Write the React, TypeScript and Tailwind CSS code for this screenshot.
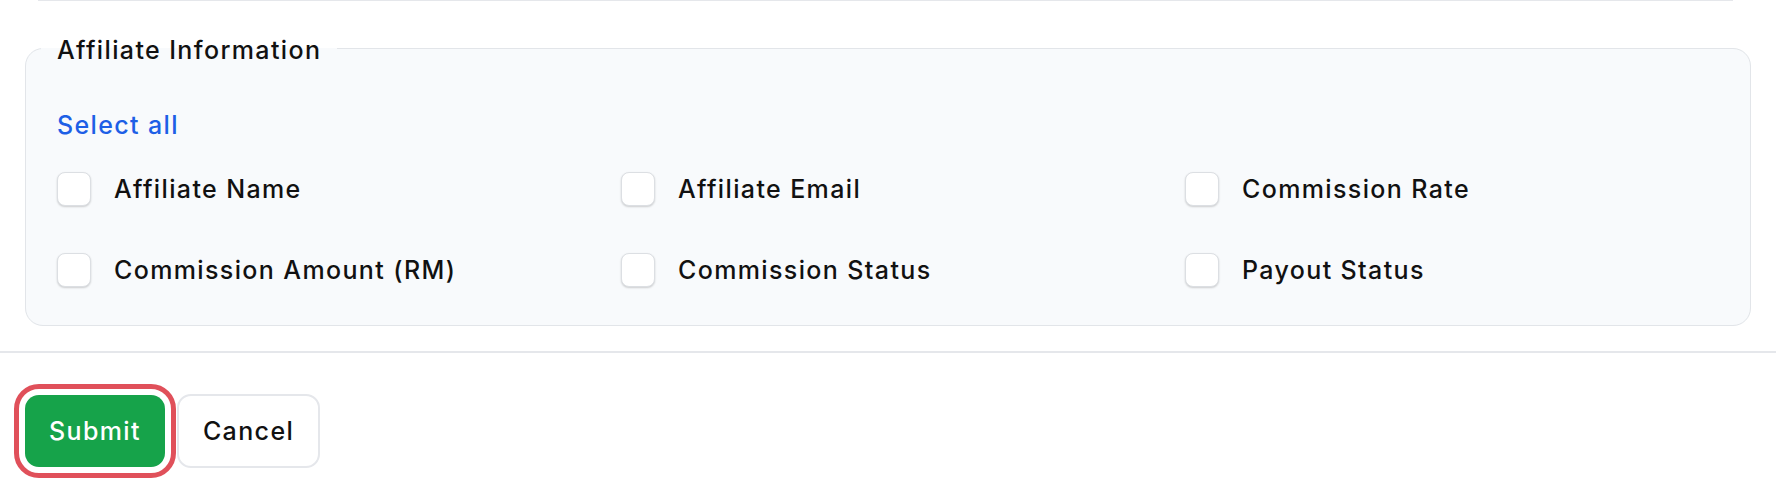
const fields = [
  'Affiliate Name',
  'Affiliate Email',
  'Commission Rate',
  'Commission Amount (RM)',
  'Commission Status',
  'Payout Status',
];

export default function App() {
  return (
    <div className="min-h-screen bg-white text-[#111] font-['Inter','Noto_Sans',sans-serif] text-[25px] leading-[36px] font-medium tracking-[0.055em]">
      {/* previous section divider */}
      <div className="ml-[38px] mr-[43px] border-t border-[#e5e7eb]" />

      <div className="px-[25px] pt-[29px] pb-[25px]">
        <fieldset className="rounded-[18px] border border-[#e2e5e9] bg-[#f8fafc] px-[31px] pt-[41px] pb-[38px]">
          <legend className="-ml-[16px] px-[16px] translate-y-[2px]">
            Affiliate Information
          </legend>

          <button type="button" className="text-[#1d5fe6] tracking-[0.055em] cursor-pointer">
            Select all
          </button>

          <div className="mt-[29px] grid grid-cols-3 gap-x-[30px] gap-y-[47px]">
            {fields.map((f) => (
              <label key={f} className="flex items-center gap-[23px] h-[34px] cursor-pointer">
                <input type="checkbox" className="sr-only" />
                <span className="w-[34px] h-[34px] rounded-[8px] border border-[#dcdfe3] bg-white shadow-[0_1px_2px_rgba(0,0,0,0.18)] shrink-0" />
                <span>{f}</span>
              </label>
            ))}
          </div>
        </fieldset>
      </div>

      <div className="border-t-2 border-[#e5e7eb]" />

      <div className="flex items-center gap-[12px] px-[25px] pt-[41px]">
        <button
          type="button"
          className="h-[72px] px-[24px] rounded-[14px] bg-[#16a34a] text-white tracking-[0.055em] outline-[5px] outline-solid outline-offset-[6px] outline-[#e0505a]"
        >
          Submit
        </button>
        <button
          type="button"
          className="h-[74px] px-[24px] rounded-[14px] border-2 border-[#e5e7eb] bg-white tracking-[0.055em]"
        >
          Cancel
        </button>
      </div>
    </div>
  );
}
